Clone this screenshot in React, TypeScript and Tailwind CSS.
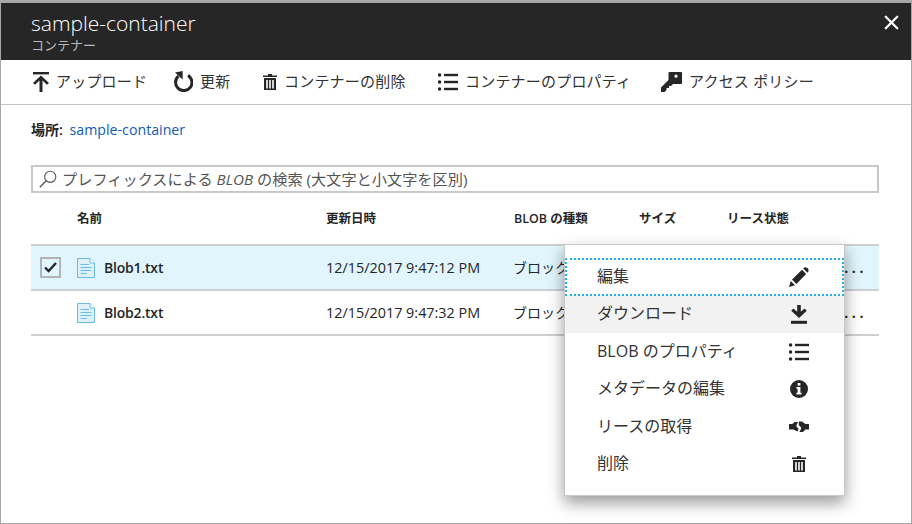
import { ReactNode } from "react";
import { X } from "lucide-react";

const font = "font-['Open_Sans','Noto_Sans_CJK_JP',sans-serif]";

const UploadIcon = () => (
  <svg width="16" height="20" viewBox="0 0 16 20" fill="#262626">
    <rect x="0" y="0" width="16" height="2.4" />
    <path d="M8 3.4 L16 11 L13.9 12.8 L9.5 8.6 V20 H6.5 V8.6 L2.1 12.8 L0 11 Z" />
  </svg>
);

const RefreshIcon = () => (
  <svg width="20" height="21" viewBox="0 0 20 21" fill="none">
    <path d="M5.4 5.2 A8.2 8.2 0 1 0 15 4.4" stroke="#262626" strokeWidth="3" />
    <path d="M2 1.6 L9.6 0 L9.6 8.4 Z" fill="#262626" />
  </svg>
);

const TrashIcon = () => (
  <svg width="14" height="16" viewBox="0 0 14 16" fill="#262626">
    <path d="M5 0 H9 V1.4 H14 V3 H0 V1.4 H5 Z" />
    <path d="M1 4 H13 V16 H1 Z M3.2 6 V14.4 H4.8 V6 Z M6.2 6 V14.4 H7.8 V6 Z M9.2 6 V14.4 H10.8 V6 Z" fillRule="evenodd" />
  </svg>
);

const ListIcon = () => (
  <svg width="20" height="18" viewBox="0 0 20 18" fill="#262626">
    <circle cx="1.6" cy="2" r="1.7" />
    <circle cx="1.6" cy="9" r="1.7" />
    <circle cx="1.6" cy="16" r="1.7" />
    <rect x="6" y="0.8" width="14" height="2.4" />
    <rect x="6" y="7.8" width="14" height="2.4" />
    <rect x="6" y="14.8" width="14" height="2.4" />
  </svg>
);

const KeyIcon = () => (
  <svg width="21" height="20" viewBox="0 0 21 20" fill="#262626">
    <path
      d="M7.5 1 Q7.5 0 8.5 0 H20 Q21 0 21 1 V11 Q21 12 20 12 H12 L10 14 H8 V16 H5.5 V18 L3.5 20 H0 V15.5 L7.5 8 Z M15 2.6 A1.6 1.6 0 1 0 15 5.8 A1.6 1.6 0 1 0 15 2.6 Z"
      fillRule="evenodd"
    />
  </svg>
);

const PencilIcon = () => (
  <svg width="20" height="20" viewBox="0 0 20 20" fill="#262626">
    <path d="M0 20 L1.8 14 L6 18.2 Z" />
    <path d="M3 12.6 L13 2.8 L17.2 7 L7.4 17 Z" />
    <path d="M14.2 1.6 Q15.6 0 17.2 0.4 Q19.6 1 19.6 3 Q19.8 4.4 18.4 5.8 Z" />
  </svg>
);

const DownloadIcon = () => (
  <svg width="16" height="19" viewBox="0 0 16 19" fill="#262626">
    <path d="M6.2 0 H9.8 V6.8 L13.6 3.4 L15.8 5.8 L8 13 L0.2 5.8 L2.4 3.4 L6.2 6.8 Z" />
    <rect x="0" y="15.8" width="16" height="3" />
  </svg>
);

const InfoIcon = () => (
  <svg width="18" height="18" viewBox="0 0 18 18">
    <circle cx="9" cy="9" r="9" fill="#262626" />
    <rect x="7.6" y="3" width="2.8" height="2.6" fill="#fff" />
    <path d="M6.4 7 H10.4 V12.8 H11.6 V14.6 H6.4 V12.8 H7.6 V8.8 H6.4 Z" fill="#fff" />
  </svg>
);

const LeaseIcon = () => (
  <svg width="20" height="12" viewBox="0 0 20 12" fill="#262626">
    <path d="M0 3 H3.4 L5.6 1 H9 L7.2 5 L9.6 8 L8.4 10.6 L4.4 8.4 H0 Z" />
    <path d="M9.8 0.6 H13 L16.4 3 H20 V8.4 H16.4 L14 11 H10.4 L12.4 7 L9.8 4 Z" />
  </svg>
);

const FileIcon = () => (
  <svg width="18" height="20" viewBox="0 0 18 20">
    <path d="M0.5 0.5 H13 L17.5 5 V19.5 H0.5 Z" fill="#dff0f9" stroke="#67bde6" />
    <path d="M13 0.5 V5 H17.5" fill="#fff" stroke="#67bde6" />
    <path d="M3.5 6.5 H12 M3.5 9.5 H14.5 M3.5 12.5 H14.5 M3.5 15.5 H10" stroke="#67bde6" />
  </svg>
);

const SearchIcon = () => (
  <svg width="18" height="18" viewBox="0 0 18 18" fill="none" stroke="#555" strokeWidth="1.1">
    <circle cx="11.2" cy="6.8" r="5.6" />
    <path d="M7 11 L0.8 17.2" strokeWidth="1.4" />
  </svg>
);

const tools: { icon: ReactNode; label: string; w: string }[] = [
  { icon: <UploadIcon />, label: "アップロード", w: "w-[140px]" },
  { icon: <RefreshIcon />, label: "更新", w: "w-[90px]" },
  { icon: <TrashIcon />, label: "コンテナーの削除", w: "w-[175px]" },
  { icon: <ListIcon />, label: "コンテナーのプロパティ", w: "w-[223px]" },
  { icon: <KeyIcon />, label: "アクセス ポリシー", w: "w-[170px]" },
];

const rows = [
  { name: "Blob1.txt", date: "12/15/2017 9:47:12 PM", selected: true },
  { name: "Blob2.txt", date: "12/15/2017 9:47:32 PM", selected: false },
];

const menu: { label: string; icon: ReactNode; cls?: string }[] = [
  { label: "編集", icon: <PencilIcon />, cls: "outline-dotted outline-2 -outline-offset-2 outline-[#1ab6e8]" },
  { label: "ダウンロード", icon: <DownloadIcon />, cls: "bg-[#f2f2f2]" },
  { label: "BLOB のプロパティ", icon: <ListIcon /> },
  { label: "メタデータの編集", icon: <InfoIcon /> },
  { label: "リースの取得", icon: <LeaseIcon /> },
  { label: "削除", icon: <TrashIcon /> },
];

export default function App() {
  return (
    <div className={`${font} relative w-[912px] h-[524px] overflow-hidden bg-white border border-t-[3px] border-[#a6a6a6] text-[#262626]`}>
      {/* title bar */}
      <div className="h-[57px] bg-[#262626] flex justify-between pl-[30px] pr-[8px]">
        <div className="pt-[7px]">
          <div className="text-[21px] leading-[27px] font-light text-white">sample-container</div>
          <div className="text-[13px] leading-[17px] text-[#b8b8b8]">コンテナー</div>
        </div>
        <X className="mt-[8px] text-white" size={23} strokeWidth={2.4} />
      </div>

      {/* toolbar */}
      <div className="h-[45px] border-b border-[#c4c4c4] flex items-center pl-[32px] pb-[1px]">
        {tools.map((tool) => (
          <div key={tool.label} className={`${tool.w} flex items-center gap-[7px] text-[15px] tracking-[0.2px] text-[#333]`}>
            <span className="flex items-center">{tool.icon}</span>
            <span className="whitespace-nowrap">{tool.label}</span>
          </div>
        ))}
      </div>

      <div className="px-[30px]">
        <div className="mt-[16px] text-[14.2px] leading-[18px]">
          <span className="font-semibold text-[14px]">場所:</span>{" "}
          <span className="ml-[3px] text-[#0f5cb5]">sample-container</span>
        </div>

        {/* search */}
        <div className="mt-[26px] h-[28px] w-[848px] border-2 border-[#c8c8c8] flex items-center gap-[5px] pl-[6px] text-[15.2px] text-[#555]">
          <SearchIcon />
          <span>
            プレフィックスによる <i>BLOB</i> の検索 (大文字と小文字を区別)
          </span>
        </div>

        {/* table */}
        <div className="w-[848px]">
          <div className="h-[53px] pt-[2px] flex items-center border-b-2 border-[#cfcfcf] text-[12.5px] font-semibold">
            <div className="w-[46px]" />
            <div className="w-[249px]">名前</div>
            <div className="w-[188px]">更新日時</div>
            <div className="w-[125px]">BLOB の種類</div>
            <div className="w-[88px]">サイズ</div>
            <div>リース状態</div>
          </div>
          {rows.map((row) => (
            <div
              key={row.name}
              className={`h-[45px] flex items-center border-b-2 border-[#cfcfcf] text-[14px] ${row.selected ? "bg-[#e0f5fc]" : ""}`}
            >
              <div className="w-[46px] pl-[9px]">
                {row.selected && (
                  <div className="w-[21px] h-[21px] border-2 border-[#b4b4b4] flex items-center justify-center">
                    <svg width="13" height="11" viewBox="0 0 13 11" fill="none" stroke="#262626" strokeWidth="2.4">
                      <path d="M1 5.5 L4.6 9 L12 1" />
                    </svg>
                  </div>
                )}
              </div>
              <div className="w-[27px] flex"><FileIcon /></div>
              <div className="w-[222px] font-semibold tracking-[-0.2px]">{row.name}</div>
              <div className="w-[187px] text-[14.4px]">{row.date}</div>
              <div className="flex-1">ブロック BLOB</div>
              <div className="pr-[12px] pt-[1px] tracking-[3.6px] font-bold leading-none">...</div>
            </div>
          ))}
        </div>
      </div>

      {/* context menu */}
      <div className="absolute left-[563px] top-[241px] w-[281px] h-[252px] bg-white border border-[#c8c8c8] shadow-[0_7px_15px_rgba(0,0,0,0.4)] pt-[13px]">
        {menu.map((item) => (
          <div key={item.label} className={`h-[37.5px] flex items-center justify-between pl-[32px] text-[16px] text-[#333] ${item.cls ?? ""}`}>
            <span className="pb-[2px]">{item.label}</span>
            <span className="w-[90px] flex justify-center">{item.icon}</span>
          </div>
        ))}
      </div>
    </div>
  );
}
